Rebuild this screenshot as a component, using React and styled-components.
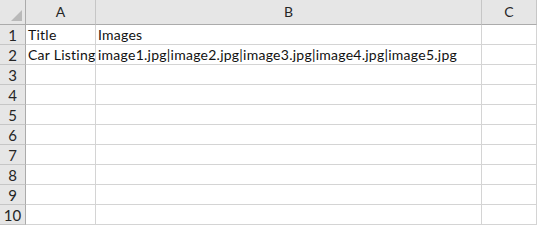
import styled, { createGlobalStyle } from "styled-components";

const GlobalStyle = createGlobalStyle`
  body {
    margin: 0;
    background: #ffffff;
    font-family: Lato, "Liberation Sans", Arial, sans-serif;
  }
`;

const columns = ["A", "B", "C"];

const rows = [
  ["Title", "Images", ""],
  ["Car Listing", "image1.jpg|image2.jpg|image3.jpg|image4.jpg|image5.jpg", ""],
  ["", "", ""],
  ["", "", ""],
  ["", "", ""],
  ["", "", ""],
  ["", "", ""],
  ["", "", ""],
  ["", "", ""],
  ["", "", ""],
];

export default function App() {
  return (
    <>
      <GlobalStyle />
      <Sheet>
        <Corner>
          <Triangle />
        </Corner>
        {columns.map((c) => (
          <ColHeader key={c}>{c}</ColHeader>
        ))}
        {rows.map((row, i) => (
          <Row key={i} row={row} index={i + 1} />
        ))}
      </Sheet>
    </>
  );
}

const Row = ({ row, index }) => (
  <>
    <RowHeader>{index}</RowHeader>
    {row.map((value, j) => (
      <Cell key={j}>{value}</Cell>
    ))}
  </>
);

// CSS
const Sheet = styled.div`
  display: grid;
  grid-template-columns: 26px 70px 386px 1fr;
  grid-template-rows: 25px repeat(10, 20px);
  width: 537px;
  height: 225px;
  overflow: hidden;
  font-size: 14px;
  color: #111;
`;

const Corner = styled.div`
  position: relative;
  background: #e6e6e6;
  border-right: 1px solid #ababab;
  border-bottom: 1px solid #ababab;
  box-sizing: border-box;
`;

const Triangle = styled.div`
  position: absolute;
  right: 3px;
  bottom: 3px;
  width: 0;
  height: 0;
  border-left: 11px solid transparent;
  border-bottom: 11px solid #b9b9b9;
`;

const ColHeader = styled.div`
  display: flex;
  align-items: center;
  justify-content: center;
  background: #e6e6e6;
  border-right: 1px solid #c6c6c6;
  border-bottom: 1px solid #ababab;
  box-sizing: border-box;
  color: #262626;
  font-size: 14px;
  padding-bottom: 1px;
`;

const RowHeader = styled.div`
  display: flex;
  align-items: center;
  justify-content: center;
  background: #e6e6e6;
  border-right: 1px solid #ababab;
  border-bottom: 1px solid #c6c6c6;
  box-sizing: border-box;
  color: #262626;
  font-size: 15px;
`;

const Cell = styled.div`
  display: flex;
  align-items: flex-end;
  padding: 0 0 1px 2px;
  border-right: 1px solid #d4d4d4;
  border-bottom: 1px solid #d4d4d4;
  box-sizing: border-box;
  white-space: nowrap;
  overflow: visible;
  line-height: 17px;
  letter-spacing: 0.25px;
`;
